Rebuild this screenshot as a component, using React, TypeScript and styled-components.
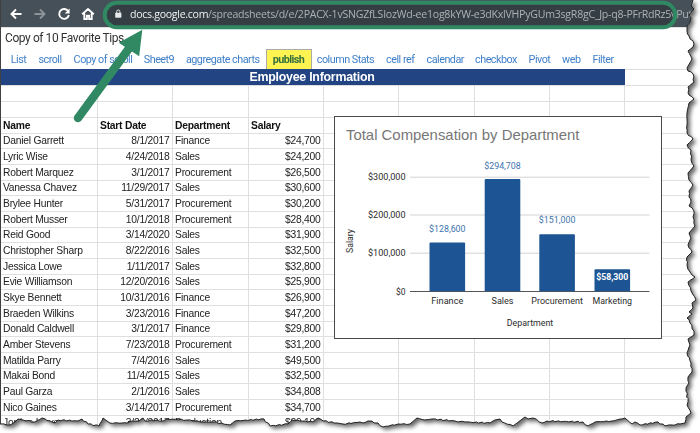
import React from "react";
import styled, { createGlobalStyle } from "styled-components";

const GlobalStyle = createGlobalStyle`
  body { margin: 0; background: #fff; overflow: hidden; }
  * { box-sizing: border-box; }
`;

const GREEN = "#308963";

type Point = [number, number];

const RIGHT_EDGE: Point[] = [
  [693, 0], [691, 6], [694, 9], [689, 15], [691, 18], [690, 22], [687, 26], [687, 31], [689, 36],
  [694, 44], [693, 47], [688, 51], [692, 59], [687, 68], [688, 71], [693, 74], [694, 82], [688, 87],
  [689, 95], [694, 99], [689, 103], [687, 113], [687, 125], [687, 133], [693, 139], [687, 145],
  [691, 150], [691, 160], [694, 166], [688, 173], [689, 180], [693, 185], [689, 191], [689, 197],
  [691, 202], [689, 206], [694, 211], [693, 217], [695, 226], [689, 233], [691, 238], [688, 245],
  [692, 252], [687, 257], [687, 265], [690, 272], [695, 277], [688, 282], [691, 291], [696, 300],
  [692, 303], [693, 308], [689, 312], [692, 314], [687, 318], [690, 323], [694, 331], [694, 335],
  [688, 339], [690, 345], [687, 353], [691, 363], [692, 372], [688, 377], [689, 383], [686, 388],
  [688, 402], [687, 405], [691, 413], [686, 417], [685, 423],
];

const BOTTOM_EDGE: Point[] = [
  [680, 424], [672, 425], [665, 426], [658, 422], [640, 425], [635, 422], [632, 424], [625, 418],
  [612, 421], [595, 422], [588, 426], [583, 422], [547, 421], [542, 423], [533, 418], [528, 419],
  [525, 417], [513, 426], [502, 422], [500, 419], [495, 420], [490, 423], [465, 422], [455, 421],
  [432, 419], [425, 420], [417, 418], [410, 424], [398, 424], [383, 427], [378, 423], [368, 421],
  [363, 423], [360, 422], [343, 424], [323, 421], [318, 418], [313, 422], [292, 420], [288, 424],
  [270, 426], [264, 419], [235, 421], [230, 425], [213, 422], [203, 422], [187, 420], [167, 419],
  [163, 421], [157, 420], [145, 421], [143, 418], [139, 421], [132, 421], [127, 423], [110, 423],
  [107, 421], [103, 418], [99, 426], [88, 424], [82, 419], [78, 421], [58, 420], [55, 423],
  [50, 421], [42, 418], [35, 422], [23, 420], [18, 419], [15, 422], [10, 425], [0, 424],
];

// Adds small irregular steps between the main points of the torn edge.
function roughen(points: Point[]): Point[] {
  const out: Point[] = [];
  points.forEach((p, i) => {
    out.push(p);
    const q = points[i + 1];
    if (!q) return;
    const steps = Math.floor(Math.hypot(q[0] - p[0], q[1] - p[1]) / 2.6);
    for (let s = 1; s < steps; s++) {
      const t = s / steps;
      const n = Math.sin(i * 12.9 + s * 78.2) * 0.6;
      out.push([p[0] + (q[0] - p[0]) * t + n, p[1] + (q[1] - p[1]) * t - n]);
    }
  });
  return out;
}

const TORN = roughen([...RIGHT_EDGE, ...BOTTOM_EDGE]);
const asPoints = (pts: Point[]) => pts.map(([x, y]) => `${x.toFixed(1)},${y.toFixed(1)}`).join(" ");
const CLIP = ["0px 0px", ...TORN.map(([x, y]) => `${x.toFixed(1)}px ${y.toFixed(1)}px`)].join(", ");

const Stage = styled.div`
  position: relative;
  width: 700px;
  height: 433px;
  overflow: hidden;
  background: #fff;
`;

const Shadow = styled.div`
  filter: drop-shadow(3px 3px 2px rgba(0, 0, 0, 0.6));
`;

const Sheet = styled.div`
  width: 700px;
  height: 433px;
  overflow: hidden;
  background: #fff;
  border-left: 1px solid #404040;
  clip-path: polygon(${CLIP});
`;

const Overlay = styled.svg`
  position: absolute;
  inset: 0;
  pointer-events: none;
`;

const Toolbar = styled.header`
  display: flex;
  align-items: center;
  height: 28px;
  background: #465058;
  border-bottom: 1px solid #dfe1e3;
`;

const NavIcons = styled.div`
  display: flex;
  gap: 8px;
  padding-left: 7px;
  flex: 0 0 103px;
`;

const NavIcon = styled.svg<{ $dim?: boolean }>`
  width: 16px;
  height: 16px;
  fill: none;
  stroke: ${(p) => (p.$dim ? "#8d9499" : "#fff")};
  stroke-width: 1.9;
`;

const AddressBar = styled.div`
  display: flex;
  align-items: center;
  width: 573px;
  height: 26px;
  border-radius: 13px;
  background: #353e44;
  padding-left: 11px;
  white-space: nowrap;
`;

const Lock = styled.svg`
  width: 7px;
  height: 10px;
  margin-right: 8px;
  flex: none;
`;

const Url = styled.div`
  font: 10.6px/14px "Open Sans", sans-serif;
  letter-spacing: -0.255px;
  color: #adb2b5;
  display: flex;
`;

const Host = styled.span`
  width: 78px;
  flex: none;
  letter-spacing: -0.3px;
  color: #eff1f2;
`;

const DocTitle = styled.h1`
  margin: 0;
  height: 21px;
  padding: 0 0 0 4px;
  font: 400 12px/21px Roboto, sans-serif;
  color: #333;
  letter-spacing: -0.42px;
`;

const Tabs = styled.nav`
  display: flex;
  height: 20px;
  padding-left: 4px;
`;

const Tab = styled.a<{ $active?: boolean; $width: number }>`
  width: ${(p) => p.$width}px;
  flex: none;
  text-align: center;
  white-space: nowrap;
  font: ${(p) => (p.$active ? 700 : 400)} 10.8px/21px Roboto, sans-serif;
  letter-spacing: ${(p) => (p.$active ? -0.55 : -0.5)}px;
  color: ${(p) => (p.$active ? "#36713d" : "#3f7fc8")};
  background: ${(p) => (p.$active ? "#fff352" : "none")};
  box-shadow: ${(p) => (p.$active ? "inset 1px 1px #aaa, inset -1px 0 #aaa" : "none")};
`;

const BandRow = styled.div`
  display: flex;
  height: 17.4px;
  border-bottom: 1px solid #dedede;
`;

const Band = styled.div`
  width: 624px;
  background: #224483;
  color: #fff;
  text-align: center;
  padding-right: 2px;
  font: 700 12.4px/17px "Liberation Sans", sans-serif;
  letter-spacing: -0.25px;
`;

const BandRest = styled.div`
  flex: 1;
  border-top: 1px solid #dedede;
`;

const Row = styled.div`
  display: grid;
  grid-template-columns: 97px 75px 76px 75px 75px 76px 75px 75px 1fr;
  height: 15.66px;
`;

const Cell = styled.div<{ $right?: boolean; $bold?: boolean; $last?: boolean }>`
  border-right: ${(p) => (p.$last ? "0" : "1px")} solid #dfdfdf;
  border-bottom: 1px solid #dfdfdf;
  padding: 1.1px ${(p) => (p.$right ? 2.4 : 0)}px 0 ${(p) => (p.$right ? 0 : 2)}px;
  text-align: ${(p) => (p.$right ? "right" : "left")};
  font: ${(p) => (p.$bold ? 700 : 400)} 10.3px/14px "Liberation Sans", sans-serif;
  letter-spacing: -0.23px;
  color: ${(p) => (p.$bold ? "#111" : "#222")};
  white-space: nowrap;
`;

const ChartCard = styled.figure`
  position: absolute;
  left: 334px;
  top: 116px;
  width: 328px;
  height: 223px;
  margin: 0;
  border: 1px solid #4a4a4a;
  background: #fff;
`;

const Chart = styled.svg`
  display: block;
  font-family: Roboto, sans-serif;
`;

const TABS: [string, number][] = [
  ["List", 27], ["scroll", 36], ["Copy of scroll", 70], ["Sheet9", 42], ["aggregate charts", 85.5],
  ["publish", 46], ["column Stats", 68], ["cell ref", 41.5], ["calendar", 48.5], ["checkbox", 53],
  ["Pivot", 34], ["web", 29.5], ["Filter", 34],
];

const PEOPLE: [string, string, string, string][] = [
  ["Daniel Garrett", "8/1/2017", "Finance", "$24,700"],
  ["Lyric Wise", "4/24/2018", "Sales", "$24,200"],
  ["Robert Marquez", "3/1/2017", "Procurement", "$26,500"],
  ["Vanessa Chavez", "11/29/2017", "Sales", "$30,600"],
  ["Brylee Hunter", "5/31/2017", "Procurement", "$30,200"],
  ["Robert Musser", "10/1/2018", "Procurement", "$28,400"],
  ["Reid Good", "3/14/2020", "Sales", "$31,900"],
  ["Christopher Sharp", "8/22/2016", "Sales", "$32,500"],
  ["Jessica Lowe", "1/11/2017", "Sales", "$32,800"],
  ["Evie Williamson", "12/20/2016", "Sales", "$25,900"],
  ["Skye Bennett", "10/31/2016", "Finance", "$26,900"],
  ["Braeden Wilkins", "3/23/2016", "Finance", "$47,200"],
  ["Donald Caldwell", "3/1/2017", "Finance", "$29,800"],
  ["Amber Stevens", "7/23/2018", "Procurement", "$31,200"],
  ["Matilda Parry", "7/4/2016", "Sales", "$49,500"],
  ["Makai Bond", "11/4/2015", "Sales", "$32,500"],
  ["Paul Garza", "2/1/2016", "Sales", "$34,808"],
  ["Nico Gaines", "3/14/2017", "Procurement", "$34,700"],
  ["Jordan Hayes", "3/21/2017", "Production", "$29,100"],
];

const BARS = [
  { name: "Finance", value: "$128,600", x: 429.5, top: 242.5, labelY: 231.9, nameWidth: 32 },
  { name: "Sales", value: "$294,708", x: 484.7, top: 179, labelY: 168.6, nameWidth: 22 },
  { name: "Procurement", value: "$151,000", x: 539.3, top: 234.3, labelY: 223, nameWidth: 51.5 },
  { name: "Marketing", value: "$58,300", x: 594.5, top: 269.3, labelY: 280.4, nameWidth: 39.5, inside: true },
];

const TICKS: [string, number, number][] = [
  ["$300,000", 177.2, 37.5], ["$200,000", 215, 37.5], ["$100,000", 253.2, 37.5], ["$0", 291.5, 9.5],
];

function BlankCells({ count }: { count: number }) {
  return (
    <>
      {Array.from({ length: count }, (_, i) => (
        <Cell key={i} $last={i === count - 1} />
      ))}
    </>
  );
}

function CompensationChart() {
  return (
    <ChartCard>
      <Chart width="326" height="221" viewBox="335 117 326 221">
        <text x="346" y="140.3" fontSize="14.4" fill="#777" fontFamily="Liberation Sans" textLength="233.5" lengthAdjust="spacingAndGlyphs">
          Total Compensation by Department
        </text>
        {TICKS.map(([label, y, w]) => (
          <g key={label}>
            <line x1="410" x2="649.5" y1={y} y2={y} stroke={label === "$0" ? "#555" : "#d3d3d3"} />
            <text x="405.5" y={y + 3.2} textAnchor="end" fontSize="9.2" fill="#2c2c2c" textLength={w} lengthAdjust="spacingAndGlyphs">
              {label}
            </text>
          </g>
        ))}
        {BARS.map((b) => (
          <g key={b.name}>
            <path d={`M${b.x} 291.2V${b.top + 1}q0-1 1-1h33.6q1 0 1 1V291.2Z`} fill="#1d5493" />
            <text
              x={b.x + 17.8}
              y={b.labelY}
              textAnchor="middle"
              fontSize="9.2"
              fontWeight={b.inside ? 700 : 400}
              fill={b.inside ? "#fff" : "#3e73ad"}
              textLength={b.inside ? 32 : 36.5}
              lengthAdjust="spacingAndGlyphs"
            >
              {b.value}
            </text>
            <text x={b.x + 17.8} y="303.5" textAnchor="middle" fontSize="9.2" fill="#2c2c2c" textLength={b.nameWidth} lengthAdjust="spacingAndGlyphs">
              {b.name}
            </text>
          </g>
        ))}
        <text x="530" y="325.8" textAnchor="middle" fontSize="9.2" fill="#2c2c2c" textLength="46.5" lengthAdjust="spacingAndGlyphs">
          Department
        </text>
        <text transform="translate(353 241) rotate(-90)" textAnchor="middle" fontSize="9.2" fill="#2c2c2c" textLength="24" lengthAdjust="spacingAndGlyphs">
          Salary
        </text>
      </Chart>
    </ChartCard>
  );
}

export default function App() {
  return (
    <>
      <GlobalStyle />
      <Stage>
        <Shadow>
          <Sheet>
            <Toolbar>
              <NavIcons>
                <NavIcon viewBox="0 0 16 16"><path d="M13.5 8H3.8M8 3.5 3.5 8 8 12.5" /></NavIcon>
                <NavIcon viewBox="0 0 16 16" $dim><path d="M2.5 8h9.7M8 3.5 12.5 8 8 12.5" /></NavIcon>
                <NavIcon viewBox="0 0 16 16"><path d="M12.2 5.2A4.9 4.9 0 1 0 12.9 9" /><path d="M13.6 2.6v4.8H8.8Z" fill="#fff" stroke="none" /></NavIcon>
                <NavIcon viewBox="0 0 16 16"><path d="M2.2 8.2 8 3l5.8 5.2M4.3 7.3V13h2.6V9.6h2.2V13h2.6V7.3" /></NavIcon>
              </NavIcons>
              <AddressBar>
                <Lock viewBox="0 0 7 10">
                  <rect x="0.2" y="3.8" width="6.2" height="5" rx="0.8" fill="#e6e8e9" />
                  <path d="M1.7 4V2.6a1.6 1.6 0 0 1 3.2 0V4" fill="none" stroke="#e6e8e9" strokeWidth="1" />
                </Lock>
                <Url>
                  <Host>docs.google.com</Host>
                  <span>/spreadsheets/d/e/2PACX-1vSNGZfLSIozWd-ee1og8kYW-e3dKxlVHPyGUm3sgR8gC_Jp-q8-PFrRdRz5vPut</span>
                </Url>
              </AddressBar>
            </Toolbar>
            <DocTitle>Copy of 10 Favorite Tips</DocTitle>
            <Tabs>
              {TABS.map(([label, width]) => (
                <Tab key={label} $width={width} $active={label === "publish"}>{label}</Tab>
              ))}
            </Tabs>
            <BandRow>
              <Band>Employee Information</Band>
              <BandRest />
            </BandRow>
            <Row><BlankCells count={9} /></Row>
            <Row><BlankCells count={9} /></Row>
            <Row>
              <Cell $bold>Name</Cell>
              <Cell $bold>Start Date</Cell>
              <Cell $bold>Department</Cell>
              <Cell $bold>Salary</Cell>
              <BlankCells count={5} />
            </Row>
            {PEOPLE.map(([name, date, department, salary]) => (
              <Row key={name}>
                <Cell>{name}</Cell>
                <Cell $right>{date}</Cell>
                <Cell>{department}</Cell>
                <Cell $right>{salary}</Cell>
                <BlankCells count={5} />
              </Row>
            ))}
          </Sheet>
        </Shadow>
        <CompensationChart />
        <Overlay width="700" height="433" viewBox="0 0 700 433">
          <rect x="104.7" y="2.7" width="570.6" height="24.6" rx="12.3" fill="none" stroke={GREEN} strokeWidth="4" />
          <line x1="78" y1="118" x2="130" y2="47" stroke={GREEN} strokeWidth="8.4" strokeLinecap="round" />
          <path d="M142.3 29.8 118.8 42.8 139.2 56.2Z" fill={GREEN} />
          <polyline points={asPoints(TORN)} fill="none" stroke="#222" strokeWidth="1" />
        </Overlay>
      </Stage>
    </>
  );
}
